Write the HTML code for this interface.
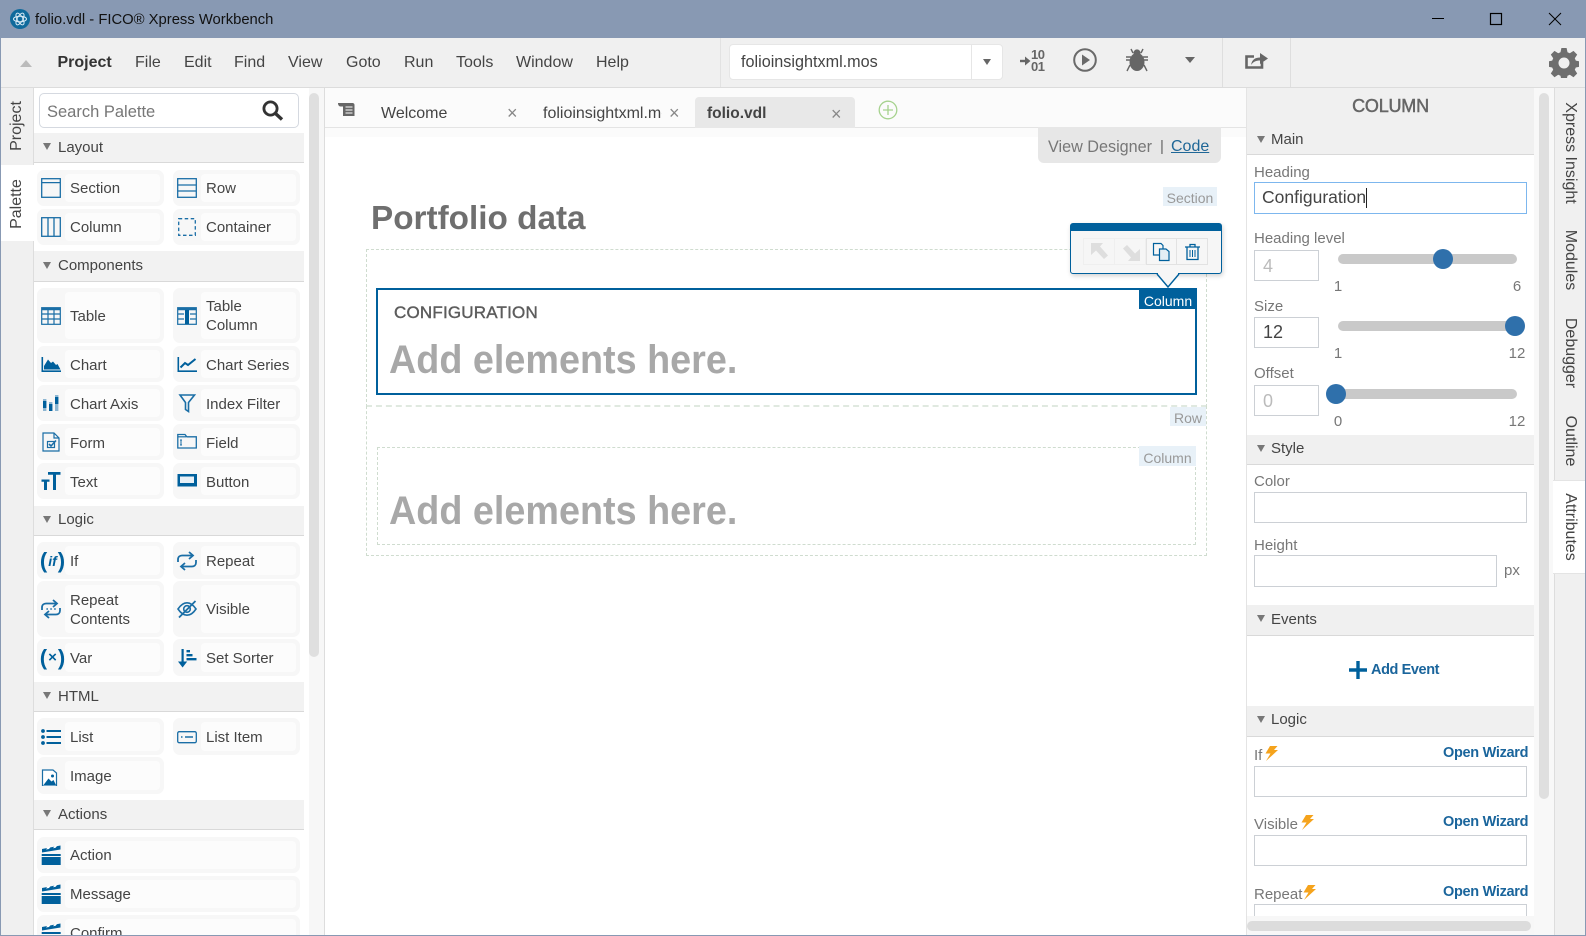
<!DOCTYPE html>
<html><head><meta charset="utf-8"><title>folio.vdl - FICO Xpress Workbench</title>
<style>
*{box-sizing:border-box}
html,body{margin:0;padding:0;width:1586px;height:936px;overflow:hidden;background:#fff;font-family:"Liberation Sans",Arial,sans-serif}
.a{position:absolute}
.t{position:absolute;white-space:nowrap}
#root{position:relative;width:1586px;height:936px;overflow:hidden;background:#fff}
.menu{position:absolute;top:53px;line-height:20px;font-size:16px;color:#444;white-space:nowrap}
.hd{position:absolute;left:34px;width:270px;background:#f2f2f2;border-bottom:1px solid #d9d9d9;font-size:15px;color:#444}
.hd span{position:absolute;left:24px;top:0;bottom:0;display:flex;align-items:center}
.tri{position:absolute;width:0;height:0;border-left:4.5px solid transparent;border-right:4.5px solid transparent;border-top:7px solid #777}
.it{position:absolute;width:127px;background:#f7f7f7;border-radius:7px}
.it::before{content:"";position:absolute;left:28px;right:4px;top:4px;bottom:4px;background:#fcfcfc;border-radius:4px}
.it.w{width:263px}
.it span{position:absolute;left:33px;top:1px;bottom:0;display:flex;align-items:center;font-size:15px;line-height:19px;color:#444;white-space:nowrap}
.it.z span{top:0}
.it.y span{top:2px}
.it svg{position:absolute;left:4px;top:50%;margin-top:-10px}
.it em{position:absolute;left:2px;top:0;bottom:0;width:27px;display:flex;align-items:center;justify-content:center;color:#00609c;font:bold 22px "Liberation Sans",sans-serif;font-style:normal;white-space:nowrap}
.rh{position:absolute;left:1247px;width:287px;background:#f0f0f0;border-bottom:1px solid #d9d9d9;font-size:15px;color:#444}
.rh span{position:absolute;left:24px;top:0;bottom:0;display:flex;align-items:center}
.lb{position:absolute;left:1254px;font-size:15px;line-height:20px;color:#777;white-space:nowrap}
.in{position:absolute;left:1254px;width:273px;height:31px;background:#fff;border:1px solid #ccd0d5}
.num{width:65px;font-size:18px;line-height:29px;padding-left:8px;color:#bbb}
.trk{position:absolute;left:1338px;width:179px;height:10px;background:#c9c9c9;border-radius:5px}
.th{position:absolute;width:20px;height:20px;border-radius:50%;background:#2f70ab}
.sc{position:absolute;font-size:15px;line-height:20px;color:#777;white-space:nowrap;transform:translateX(-50%)}
.ow{position:absolute;left:1443px;width:83px;text-align:right;font-size:14.5px;font-weight:bold;line-height:20px;color:#1a659c;white-space:nowrap;letter-spacing:-.3px}
.vt{position:absolute;white-space:nowrap;font-size:16px;line-height:20px;color:#444}
.tag{position:absolute;background:#e8f1f8;color:#999;font-size:14px;text-align:center;white-space:nowrap}
.add{position:absolute;left:389px;font-size:40px;line-height:50px;font-weight:bold;color:#a8a8a8;white-space:nowrap;transform:scaleX(.944);transform-origin:left center}
</style></head><body>
<div id="root">

<!-- title bar -->
<div class="a" style="left:0;top:0;width:1586px;height:38px;background:#8899b3"></div>
<svg class="a" style="left:10px;top:9px" width="20" height="20" viewBox="0 0 20 20"><circle cx="10" cy="10" r="10" fill="#0f6a9c"/><g fill="none" stroke="#d8eaf5" stroke-width="1"><ellipse cx="10" cy="10" rx="6.5" ry="2.8"/><ellipse cx="10" cy="10" rx="6.5" ry="2.8" transform="rotate(60 10 10)"/><ellipse cx="10" cy="10" rx="6.5" ry="2.8" transform="rotate(120 10 10)"/></g></svg>
<div class="t" style="left:35px;top:10px;font-size:14.8px;line-height:20px;color:#111">folio.vdl - FICO® Xpress Workbench</div>
<svg class="a" style="left:1430px;top:10px" width="140" height="18" viewBox="0 0 140 18"><path d="M2 8.5H14" stroke="#000" fill="none"/><rect x="60.5" y="3.5" width="11" height="11" stroke="#000" stroke-width="1.2" fill="none"/><path d="M119 3L131 15M131 3L119 15" stroke="#000" fill="none"/></svg>

<!-- toolbar -->
<div class="a" style="left:0;top:38px;width:1586px;height:50px;background:#f0f0f0;border-bottom:1px solid #dcdcdc"></div>
<div class="a" style="left:20px;top:60px;width:0;height:0;border-left:6px solid transparent;border-right:6px solid transparent;border-bottom:7px solid #bbb"></div>
<div class="menu" style="left:57.5px;font-weight:bold;color:#333">Project</div>
<div class="menu" style="left:135px">File</div>
<div class="menu" style="left:184px">Edit</div>
<div class="menu" style="left:234px">Find</div>
<div class="menu" style="left:288px">View</div>
<div class="menu" style="left:346px">Goto</div>
<div class="menu" style="left:404px">Run</div>
<div class="menu" style="left:456px">Tools</div>
<div class="menu" style="left:516px">Window</div>
<div class="menu" style="left:596px">Help</div>

<div class="a" style="left:720px;top:38px;width:1px;height:49px;background:#e2e2e2"></div>
<div class="a" style="left:729px;top:44px;width:274px;height:36px;background:#fff;border:1px solid #e6e6e6;border-radius:4px"></div>
<div class="a" style="left:971px;top:45px;width:1px;height:34px;background:#e6e6e6"></div>
<div class="t" style="left:741px;top:52px;font-size:16.2px;line-height:20px;color:#444">folioinsightxml.mos</div>
<div class="a" style="left:982.5px;top:59px;width:0;height:0;border-left:4.5px solid transparent;border-right:4.5px solid transparent;border-top:6px solid #666"></div>

<svg class="a" style="left:1018px;top:52px" width="14" height="18" viewBox="0 0 14 18"><path d="M2 9H8" stroke="#666" stroke-width="2.4" fill="none"/><path d="M7 4.5L12.5 9L7 13.5Z" fill="#666"/></svg>
<div class="t" style="left:1031px;top:48px;font-size:13px;font-weight:bold;line-height:14px;color:#666;letter-spacing:-.5px">10</div>
<div class="t" style="left:1031px;top:60px;font-size:13px;font-weight:bold;line-height:14px;color:#666;letter-spacing:-.5px">01</div>
<svg class="a" style="left:1072px;top:47px" width="26" height="26" viewBox="0 0 26 26"><circle cx="13" cy="13" r="10.8" fill="none" stroke="#6a6a6a" stroke-width="2"/><path d="M10 7.5L18 13L10 18.5Z" fill="#6a6a6a"/></svg>
<svg class="a" style="left:1124px;top:47px" width="26" height="26" viewBox="0 0 26 26"><ellipse cx="13" cy="15" rx="7.5" ry="9" fill="#666"/><circle cx="13" cy="6" r="3.6" fill="#666"/><path d="M7 2L9 6M19 2L17 6M2 10H7M24 10H19M2 13h5M24 13h-5M3 24L6 18M23 24L20 18" stroke="#666" stroke-width="1.4" fill="none"/></svg>
<div class="a" style="left:1185px;top:57px;width:0;height:0;border-left:5.5px solid transparent;border-right:5.5px solid transparent;border-top:6px solid #666"></div>
<div class="a" style="left:1222px;top:38px;width:1px;height:49px;background:#dedede"></div>
<svg class="a" style="left:1245px;top:51px" width="24" height="18" viewBox="0 0 24 18"><path d="M9 5.5H1.5V16.5H17V11" fill="none" stroke="#666" stroke-width="2.6"/><path d="M6 14C7 8 11 6.5 15 6.5V2L23 7.5L15 13V9.5C11 9.5 8.5 10.5 6 14Z" fill="#666"/></svg>
<div class="a" style="left:1290px;top:38px;width:1px;height:49px;background:#dedede"></div>
<svg class="a" style="left:1549px;top:48px" width="30" height="30" viewBox="0 0 30 30"><path fill="#6e6e6e" fill-rule="evenodd" d="M12.4 0h5.2l.9 4.3 2.3 1 3.7-2.4 3.7 3.7-2.4 3.7 1 2.3 4.2.8v5.2l-4.2.9-1 2.3 2.4 3.7-3.7 3.7-3.7-2.4-2.3 1-.9 4.2h-5.2l-.9-4.2-2.3-1-3.7 2.4-3.7-3.7 2.4-3.7-1-2.3-4.2-.9v-5.2l4.2-.8 1-2.3-2.4-3.7 3.7-3.7 3.7 2.4 2.3-1zM15 9.5a5.5 5.5 0 1 0 0 11 5.5 5.5 0 0 0 0-11z"/></svg>

<!-- left rail -->
<div class="a" style="left:1px;top:88px;width:33px;height:847px;background:#f0f0f0;border-right:1px solid #ddd"></div>
<div class="a" style="left:1px;top:165px;width:34px;height:76px;background:#fff"></div>
<div class="vt" style="left:17px;top:125.5px;transform:translate(-50%,-50%) rotate(-90deg)">Project</div>
<div class="vt" style="left:17px;top:203.5px;transform:translate(-50%,-50%) rotate(-90deg)">Palette</div>

<!-- palette -->
<div class="a" style="left:304px;top:88px;width:21px;height:847px;background:#f7f7f7"></div>
<div class="a" style="left:304px;top:88px;width:5px;height:847px;background:#fff"></div>
<div class="a" style="left:324px;top:88px;width:1px;height:847px;background:#ddd"></div>
<div class="a" style="left:309px;top:93px;width:10px;height:564px;background:#dfdfdf;border-radius:5px"></div>
<div class="a" style="left:39px;top:93px;width:260px;height:35px;border:1px solid #d5d9e0;border-radius:5px;background:#fff"></div>
<div class="t" style="left:47px;top:102px;font-size:16.5px;line-height:20px;color:#777">Search Palette</div>
<svg class="a" style="left:262px;top:100px" width="22" height="21" viewBox="0 0 22 21"><circle cx="8.5" cy="8.5" r="6.6" fill="none" stroke="#333" stroke-width="2.8"/><path d="M13.5 13.5L20 19.5" stroke="#333" stroke-width="3.4" fill="none"/></svg>

<div style="position:absolute;left:0;top:0;width:1586px;height:935px;overflow:hidden">
<div class="hd" style="top:133px;height:30px"><span>Layout</span></div><div class="tri" style="left:43px;top:143px"></div>
<div class="it z" style="left:37px;top:170px;height:36px"><svg width="20" height="20" viewBox="0 0 20 20"><rect x=".7" y=".7" width="18.6" height="18.6" fill="none" stroke="#1a6ea6" stroke-width="1.3"/><path d="M1 4.6H19" stroke="#1a6ea6" stroke-width="1.3"/></svg><span>Section</span></div>
<div class="it z" style="left:173px;top:170px;height:36px"><svg width="20" height="20" viewBox="0 0 20 20" fill="none" stroke="#1a6ea6" stroke-width="1.3"><rect x=".7" y=".7" width="18.6" height="18.6"/><path d="M1 7H19M1 13H19"/></svg><span>Row</span></div>
<div class="it z" style="left:37px;top:209px;height:36px"><svg width="20" height="20" viewBox="0 0 20 20" fill="none" stroke="#1a6ea6" stroke-width="1.3"><rect x=".7" y=".7" width="18.6" height="18.6"/><path d="M7 1V19M13 1V19"/></svg><span>Column</span></div>
<div class="it z" style="left:173px;top:209px;height:36px"><svg width="20" height="20" viewBox="0 0 20 20" fill="none" stroke="#1a6ea6" stroke-width="1.3"><rect x="1.7" y="1.7" width="16.6" height="16.6" stroke-dasharray="3.5 2.5"/></svg><span>Container</span></div>

<div class="hd" style="top:251px;height:31px"><span style="top:-2px">Components</span></div><div class="tri" style="left:43px;top:262px"></div>
<div class="it" style="left:37px;top:288px;height:55px"><svg width="20" height="20" viewBox="0 0 20 20" fill="none" stroke="#1a6ea6" stroke-width="1.2"><rect x=".7" y="1.7" width="18.6" height="16.6"/><path d="M1 3H19" stroke-width="2.4"/><path d="M1 8H19M1 13H19M7 3V18M13 3V18"/></svg><span>Table</span></div>
<div class="it" style="left:173px;top:288px;height:55px"><svg width="20" height="20" viewBox="0 0 20 20" fill="none" stroke="#1a6ea6" stroke-width="1.2"><rect x=".7" y="1.7" width="18.6" height="16.6"/><path d="M1 3H19" stroke-width="2.4"/><path d="M1 8H7M13 8H19M1 13H7M13 13H19"/><rect x="8" y="4" width="4" height="14" fill="#00609c" stroke="none"/></svg><span>Table<br>Column</span></div>
<div class="it y" style="left:37px;top:346px;height:36px"><svg width="20" height="20" viewBox="0 0 20 20"><path d="M.5 3V18H20V16.400H2.100V3Z" fill="#00609c"/><path d="M3 15.500V12L7 5.500L10 9L12 7.500L15 11L16.500 10L19.500 15.500Z" fill="#00609c"/></svg><span>Chart</span></div>
<div class="it y" style="left:173px;top:346px;height:36px"><svg width="20" height="20" viewBox="0 0 20 20"><path d="M.5 3V18H20V16.400H2.100V3Z" fill="#00609c"/><path d="M3.500 13.500L8 9L11 11L18.500 5" fill="none" stroke="#00609c" stroke-width="2"/></svg><span>Chart Series</span></div>
<div class="it y" style="left:37px;top:385px;height:36px"><svg width="20" height="20" viewBox="0 0 20 20"><path d="M2 6h3.400v12H2zM8 9h3.400v9H8zM14 2h3.400v16H14z" fill="#8db6d2"/><path d="M2 8h3.400v7H2zM8 11h3.400v7H8zM14 4h3.400v7H14z" fill="#00609c"/></svg><span>Chart Axis</span></div>
<div class="it y" style="left:173px;top:385px;height:36px"><svg width="20" height="20" viewBox="0 0 20 20" fill="none" stroke="#1a6ea6" stroke-width="1.6"><path d="M3 2H17.500L11.500 9.500V18.500L8.500 16.500V9.500Z"/></svg><span>Index Filter</span></div>
<div class="it y" style="left:37px;top:424px;height:36px"><svg width="20" height="20" viewBox="0 0 20 20" fill="none" stroke="#1a6ea6" stroke-width="1.2"><path d="M2 1H13L18 6V19H2Z"/><path d="M13 1V6H18"/><rect x="6.500" y="9.500" width="7" height="6"/><path d="M8 12L10 14L15 8.500" stroke-width="1.600"/></svg><span>Form</span></div>
<div class="it y" style="left:173px;top:424px;height:36px"><svg width="20" height="20" viewBox="0 0 20 20" fill="none" stroke="#1a6ea6" stroke-width="1.3"><path d="M.8 16V2.500H8L9.800 4.800H19.300V16Z"/><path d="M1 4.800H9" stroke-width="1.200"/><path d="M4 8V13M3 8H5M3 13H5" stroke-width="1"/></svg><span>Field</span></div>
<div class="it y" style="left:37px;top:463px;height:36px"><svg width="20" height="20" viewBox="0 0 20 20"><path d="M7 1H19.500V3.800H15V19H12V3.800H7Z" fill="#00609c"/><path d="M.5 8.500H8.500V10.800H6V19H3V10.800H.5Z" fill="#00609c"/></svg><span>Text</span></div>
<div class="it y" style="left:173px;top:463px;height:36px"><svg width="20" height="20" viewBox="0 0 20 20"><rect x=".5" y="3" width="19.500" height="12.500" fill="#00609c"/><rect x="3" y="5.500" width="14" height="6.500" fill="#e8f0f6"/></svg><span>Button</span></div>

<div class="hd" style="top:506px;height:30px"><span style="top:-2px">Logic</span></div><div class="tri" style="left:43px;top:516px"></div>
<div class="it" style="left:37px;top:542px;height:37px"><em>(<i style="font-size:14px;margin:0 1px">if</i>)</em><span>If</span></div>
<div class="it" style="left:173px;top:542px;height:37px"><svg width="20" height="20" viewBox="0 0 20 20" fill="none" stroke="#1a6ea6" stroke-width="1.800"><path d="M1 11V8.500C1 6 2.800 4.500 5 4.500H15"/><path d="M12 1L16 4.500L12 8"/><path d="M19 9V11.500C19 14 17.200 15.500 15 15.500H5"/><path d="M8 12L4 15.500L8 19"/></svg><span>Repeat</span></div>
<div class="it" style="left:37px;top:581px;height:56px"><svg width="20" height="20" viewBox="0 0 20 20" fill="none" stroke="#1a6ea6" stroke-width="1.800"><path d="M1 11V8.500C1 6 2.800 4.500 5 4.500H15"/><path d="M12 1L16 4.500L12 8"/><path d="M19 9V11.500C19 14 17.200 15.500 15 15.500H5"/><path d="M8 12L4 15.500L8 19"/><path d="M5.500 10H6.800M9.400 10H10.700M13.300 10H14.600" stroke-width="1.800"/></svg><span>Repeat<br>Contents</span></div>
<div class="it" style="left:173px;top:581px;height:56px"><svg width="20" height="20" viewBox="0 0 20 20" fill="none" stroke="#1a6ea6" stroke-width="1.600"><path d="M1 10C4 5.500 7 3.800 10 3.800S16 5.500 19 10C16 14.500 13 16.200 10 16.200S4 14.500 1 10Z"/><circle cx="10" cy="10" r="3.300"/><path d="M2 18.500L18.500 2" stroke-width="1.800"/></svg><span>Visible</span></div>
<div class="it" style="left:37px;top:639px;height:37px"><em>(<span style="position:static;display:inline;font:bold 15px 'Liberation Sans',sans-serif;color:#00609c;margin:0 1px">×</span>)</em><span>Var</span></div>
<div class="it" style="left:173px;top:639px;height:37px"><svg width="20" height="20" viewBox="0 0 20 20"><path d="M4.500 1H6.700V15H4.500Z" fill="#00609c"/><path d="M1 13.500H10.200L5.600 19.500Z" fill="#00609c"/><path d="M9.500 2h3.500v2.400H9.500zM9.500 6h6v2.400h-6zM9.500 10h10v2.400H9.500z" fill="#00609c"/></svg><span>Set Sorter</span></div>

<div class="hd" style="top:682px;height:30px"><span>HTML</span></div><div class="tri" style="left:43px;top:692px"></div>
<div class="it" style="left:37px;top:718px;height:37px"><svg width="20" height="20" viewBox="0 0 20 20"><circle cx="2" cy="4" r="1.900" fill="#00609c"/><circle cx="2" cy="10" r="1.900" fill="#00609c"/><circle cx="2" cy="16" r="1.900" fill="#00609c"/><path d="M5.500 3H20V5H5.500zM5.500 9H20V11H5.500zM5.500 15H20V17H5.500z" fill="#00609c"/></svg><span>List</span></div>
<div class="it" style="left:173px;top:718px;height:37px"><svg width="20" height="20" viewBox="0 0 20 20" fill="none" stroke="#1a6ea6" stroke-width="1.300"><rect x=".7" y="4.700" width="18.600" height="11" rx="1.500"/><path d="M4 10H5.500M8 10H16" stroke-width="1.500"/></svg><span>List Item</span></div>
<div class="it" style="left:37px;top:757px;height:37px"><svg width="20" height="20" viewBox="0 0 20 20"><path d="M1.500 4H12L15.500 7V20H1.500Z" fill="#fff" stroke="#1a6ea6" stroke-width="1.200"/><path d="M2.500 19L7.500 12.500L10.500 15.500L12.500 14L15 19Z" fill="#00609c"/><circle cx="11.500" cy="10" r="1.500" fill="#00609c"/></svg><span>Image</span></div>

<div class="hd" style="top:800px;height:30px"><span>Actions</span></div><div class="tri" style="left:43px;top:810px"></div>
<div class="it w z" style="left:37px;top:837px;height:36px"><svg width="20" height="20" viewBox="0 0 20 20"><path d="M1 4L19.500 .500V4.500L1 7.500Z" fill="#00609c"/><path d="M5 4.500l2-2.600 3-.5-2 2.600zM12 3.200l2-2.500 2.600-.4-2 2.500z" fill="#fff"/><rect x=".7" y="9" width="19" height="2" fill="#00609c"/><rect x=".7" y="12" width="19" height="8" fill="#00609c"/></svg><span>Action</span></div>
<div class="it w z" style="left:37px;top:876px;height:36px"><svg width="20" height="20" viewBox="0 0 20 20"><path d="M1 4L19.500 .500V4.500L1 7.500Z" fill="#00609c"/><path d="M5 4.500l2-2.600 3-.5-2 2.600zM12 3.200l2-2.500 2.600-.4-2 2.500z" fill="#fff"/><rect x=".7" y="9" width="19" height="2" fill="#00609c"/><rect x=".7" y="12" width="19" height="8" fill="#00609c"/></svg><span>Message</span></div>
<div class="it w z" style="left:37px;top:915px;height:36px"><svg width="20" height="20" viewBox="0 0 20 20"><path d="M1 4L19.500 .500V4.500L1 7.500Z" fill="#00609c"/><path d="M5 4.500l2-2.600 3-.5-2 2.600zM12 3.200l2-2.500 2.600-.4-2 2.500z" fill="#fff"/><rect x=".7" y="9" width="19" height="2" fill="#00609c"/><rect x=".7" y="12" width="19" height="8" fill="#00609c"/></svg><span>Confirm</span></div>
</div>

<!-- tabs -->
<div class="a" style="left:325px;top:88px;width:922px;height:49px;background:#fbfbfb"></div>
<div class="a" style="left:325px;top:127px;width:922px;height:1px;background:#e4e4e4"></div>
<svg class="a" style="left:337px;top:102px" width="19" height="15" viewBox="0 0 19 15"><path d="M1 1H15C17 1 17.500 2 17.500 3V14H6V4.500H3.500C2 4.500 1 3 1 1Z" fill="#666"/><path d="M8.500 5H15.500M8.500 8H15.500M8.500 11H15.500" stroke="#fff" stroke-width="1.100"/></svg>
<div class="t" style="left:381px;top:104px;font-size:16px;line-height:20px;color:#444">Welcome</div>
<div class="t" style="left:507px;top:103px;font-size:18px;line-height:20px;color:#888">×</div>
<div class="t" style="left:543px;top:104px;width:119px;overflow:hidden;font-size:16px;line-height:20px;color:#444">folioinsightxml.mos</div>
<div class="t" style="left:669px;top:103px;font-size:18px;line-height:20px;color:#888">×</div>
<div class="a" style="left:695px;top:97px;width:160px;height:31px;background:#e8e8e8;border-radius:4px 4px 0 0"></div>
<div class="t" style="left:707px;top:104px;font-size:15.5px;font-weight:bold;line-height:20px;color:#444">folio.vdl</div>
<div class="t" style="left:831px;top:104px;font-size:18px;line-height:20px;color:#888">×</div>
<svg class="a" style="left:878px;top:100px" width="20" height="20" viewBox="0 0 20 20" fill="none" stroke="#a6d28e" stroke-width="1.300"><circle cx="10" cy="10" r="8.800"/><path d="M10 5V15M5 10H15"/></svg>

<!-- designer toggle -->
<div class="a" style="left:1038px;top:127px;width:183px;height:36px;background:#e7e7e7;border-radius:0 0 6px 6px"></div>
<div class="t" style="left:1048px;top:137px;font-size:16.2px;line-height:20px;color:#777">View Designer</div>
<div class="t" style="left:1160px;top:137px;font-size:15px;line-height:20px;color:#666">|</div>
<div class="t" style="left:1171px;top:137px;font-size:16px;line-height:20px;color:#1f6797;text-decoration:underline">Code</div>

<!-- canvas -->
<div class="t" style="left:371px;top:199px;font-size:33.3px;font-weight:bold;line-height:40px;color:#6f6f6f">Portfolio data</div>
<div class="tag" style="left:1163px;top:187px;width:54px;height:19px;line-height:23px">Section</div>
<div class="a" style="left:366px;top:249px;width:841px;height:158px;border:1px dashed #cfdccf;border-bottom:2px dashed #e0e9e0"></div>
<div class="a" style="left:366px;top:406px;width:841px;height:150px;border:1px dashed #cfdccf;border-top:none"></div>
<div class="a" style="left:376px;top:288px;width:821px;height:107px;border:2px solid #00609c;background:#fff"></div>
<div class="t" style="left:394px;top:303px;font-size:17px;line-height:20px;letter-spacing:.2px;color:#5c5c5c;-webkit-text-stroke:.4px #5c5c5c">CONFIGURATION</div>
<div class="add" style="top:335px">Add elements here.</div>
<div class="a" style="left:1139px;top:288px;width:58px;height:21px;background:#00609c;color:#fff;font-size:14px;line-height:26px;overflow:hidden;text-align:center">Column</div>

<div class="tag" style="left:1170px;top:407px;width:36px;height:19px;line-height:23px">Row</div>
<div class="a" style="left:377px;top:447px;width:819px;height:98px;border:1px dashed #cfdccf"></div>
<div class="tag" style="left:1139px;top:446px;width:57px;height:20px;line-height:24px">Column</div>
<div class="add" style="top:486px">Add elements here.</div>

<!-- popup -->
<div class="a" style="left:1070px;top:223px;width:152px;height:51px;background:#f6f6f6;border:1px solid #00609c;border-top:8px solid #00609c;border-radius:3px;box-shadow:1px 2px 5px rgba(0,0,0,.18)"></div>
<svg class="a" style="left:1155px;top:272px" width="26" height="17" viewBox="0 0 26 17"><path d="M2 2L13 15L24 2" fill="#f6f6f6" stroke="#00609c" stroke-width="1.400"/><path d="M3 1H23V2H3Z" fill="#f6f6f6"/></svg>
<div class="a" style="left:1083px;top:238px;width:32px;height:27px;border:1px solid #efefef"></div>
<div class="a" style="left:1115px;top:238px;width:31px;height:27px;border:1px solid #efefef;border-left:none"></div>
<div class="a" style="left:1146px;top:238px;width:31px;height:27px;border:1px solid #e2e2e2"></div>
<div class="a" style="left:1177px;top:238px;width:31px;height:27px;border:1px solid #e2e2e2;border-left:none"></div>
<svg class="a" style="left:1090px;top:242px" width="20" height="20" viewBox="0 0 20 20"><path d="M1 1H13L10 4.500L18 13.500L14 17L6 8.500L1 13Z" fill="#dedede"/></svg>
<svg class="a" style="left:1121px;top:242px" width="20" height="20" viewBox="0 0 20 20"><path d="M19 19H7L10 15.500L2 6.500L6 3L14 11.500L19 7Z" fill="#dedede"/></svg>
<svg class="a" style="left:1152px;top:242px" width="20" height="20" viewBox="0 0 20 20" fill="none" stroke="#00609c" stroke-width="1.200"><path d="M1.500 1.500H9L11 3.500V13H1.500Z" fill="#f6f6f6"/><path d="M7.500 7H14L17 9.500V18.500H7.500Z" fill="#e4eef5"/></svg>
<svg class="a" style="left:1184px;top:243px" width="17" height="18" viewBox="0 0 17 18" fill="none" stroke="#00609c" stroke-width="1.300"><path d="M1 4H16M6 4V1.500H11V4"/><path d="M3 4V16.500H14V4"/><path d="M6 7V14M8.500 7V14M11 7V14" stroke-width="1"/></svg>

<!-- right panel -->
<div class="a" style="left:1246px;top:88px;width:1px;height:847px;background:#e4e4e4"></div>
<div class="a" style="left:1247px;top:88px;width:287px;height:67px;background:#f0f0f0;border-bottom:1px solid #d9d9d9"></div>
<div class="t" style="left:1247px;top:95px;width:287px;text-align:center;font-size:18px;line-height:22px;color:#666;letter-spacing:-.2px;-webkit-text-stroke:.5px #666">COLUMN</div>
<div class="t" style="left:1271px;top:130px;font-size:15px;line-height:20px;color:#444">Main</div><div class="tri" style="left:1257px;top:136px"></div>

<div class="lb" style="top:163px">Heading</div>
<div class="in" style="top:182px;height:32px;border-color:#7db7ee"></div>
<div class="t" style="left:1262px;top:186px;font-size:17.5px;line-height:22px;color:#444">Configuration</div>
<div class="a" style="left:1366px;top:188px;width:1px;height:20px;background:#222"></div>

<div class="lb" style="top:229px">Heading level</div>
<div class="in num" style="top:250px;line-height:31px">4</div>
<div class="trk" style="top:254px"></div><div class="th" style="left:1433px;top:249px"></div>
<div class="sc" style="left:1338px;top:277px">1</div><div class="sc" style="left:1517px;top:277px">6</div>

<div class="lb" style="top:297px">Size</div>
<div class="in num" style="top:317px;color:#444">12</div>
<div class="trk" style="top:321px"></div><div class="th" style="left:1505px;top:316px"></div>
<div class="sc" style="left:1338px;top:344px">1</div><div class="sc" style="left:1517px;top:344px">12</div>

<div class="lb" style="top:364px">Offset</div>
<div class="in num" style="top:385px;line-height:31px">0</div>
<div class="trk" style="top:389px"></div><div class="th" style="left:1326px;top:384px"></div>
<div class="sc" style="left:1338px;top:412px">0</div><div class="sc" style="left:1517px;top:412px">12</div>

<div class="rh" style="top:435px;height:30px"><span style="top:-2px">Style</span></div><div class="tri" style="left:1257px;top:445px"></div>
<div class="lb" style="top:472px">Color</div>
<div class="in" style="top:492px"></div>
<div class="lb" style="top:536px">Height</div>
<div class="in" style="top:555px;width:243px;height:32px"></div>
<div class="t" style="left:1504px;top:561px;font-size:15px;line-height:20px;color:#777">px</div>

<div class="rh" style="top:605px;height:31px"><span style="top:-1px">Events</span></div><div class="tri" style="left:1257px;top:615px"></div>
<svg class="a" style="left:1349px;top:661px" width="18" height="18" viewBox="0 0 18 18"><path d="M9 0V18M0 9H18" stroke="#00609c" stroke-width="3.400" fill="none"/></svg>
<div class="t" style="left:1371px;top:660px;font-size:14.5px;font-weight:bold;line-height:20px;color:#1a659c;letter-spacing:-.4px">Add Event</div>

<div class="rh" style="top:706px;height:31px"><span style="top:-3px">Logic</span></div><div class="tri" style="left:1257px;top:716px"></div>
<div class="lb" style="top:746px">If</div>
<svg class="a" style="left:1265px;top:746px" width="13" height="15" viewBox="0 0 13 15"><path d="M5 0H12.500L9 4H13L1 15L5.500 7.500H.5Z" fill="#f5a31c"/></svg>
<div class="ow" style="top:743px">Open Wizard</div>
<div class="in" style="top:766px"></div>
<div class="lb" style="top:815px">Visible</div>
<svg class="a" style="left:1301px;top:815px" width="13" height="15" viewBox="0 0 13 15"><path d="M5 0H12.500L9 4H13L1 15L5.500 7.500H.5Z" fill="#f5a31c"/></svg>
<div class="ow" style="top:812px">Open Wizard</div>
<div class="in" style="top:835px"></div>
<div class="lb" style="top:885px">Repeat</div>
<svg class="a" style="left:1303px;top:885px" width="13" height="15" viewBox="0 0 13 15"><path d="M5 0H12.500L9 4H13L1 15L5.500 7.500H.5Z" fill="#f5a31c"/></svg>
<div class="ow" style="top:882px">Open Wizard</div>
<div class="in" style="top:904px"></div>
<div class="a" style="left:1247px;top:916px;width:287px;height:19px;background:#f7f7f7"></div>
<div class="a" style="left:1247px;top:921px;width:284px;height:10px;background:#dcdcdc;border-radius:5px"></div>

<!-- right scroll + rail -->
<div class="a" style="left:1534px;top:88px;width:20px;height:847px;background:#f8f8f8"></div>
<div class="a" style="left:1539px;top:93px;width:10px;height:706px;background:#dfdfdf;border-radius:5px"></div>
<div class="a" style="left:1554px;top:88px;width:31px;height:847px;background:#f0f0f0;border-left:1px solid #ddd"></div>
<div class="a" style="left:1553px;top:480px;width:32px;height:94px;background:#fff;border-top:1px solid #e4e4e4;border-bottom:1px solid #e4e4e4"></div>
<div class="vt" style="left:1570px;top:152.5px;transform:translate(-50%,-50%) rotate(90deg)">Xpress Insight</div>
<div class="vt" style="left:1570px;top:260px;transform:translate(-50%,-50%) rotate(90deg)">Modules</div>
<div class="vt" style="left:1570px;top:353px;transform:translate(-50%,-50%) rotate(90deg)">Debugger</div>
<div class="vt" style="left:1570px;top:441px;transform:translate(-50%,-50%) rotate(90deg)">Outline</div>
<div class="vt" style="left:1570px;top:526.5px;transform:translate(-50%,-50%) rotate(90deg)">Attributes</div>

<!-- window border -->
<div class="a" style="left:0;top:38px;width:1px;height:898px;background:#8899b3"></div>
<div class="a" style="left:1585px;top:38px;width:1px;height:898px;background:#8899b3"></div>
<div class="a" style="left:0;top:935px;width:1586px;height:1px;background:#8899b3"></div>
</div>
</body></html>
